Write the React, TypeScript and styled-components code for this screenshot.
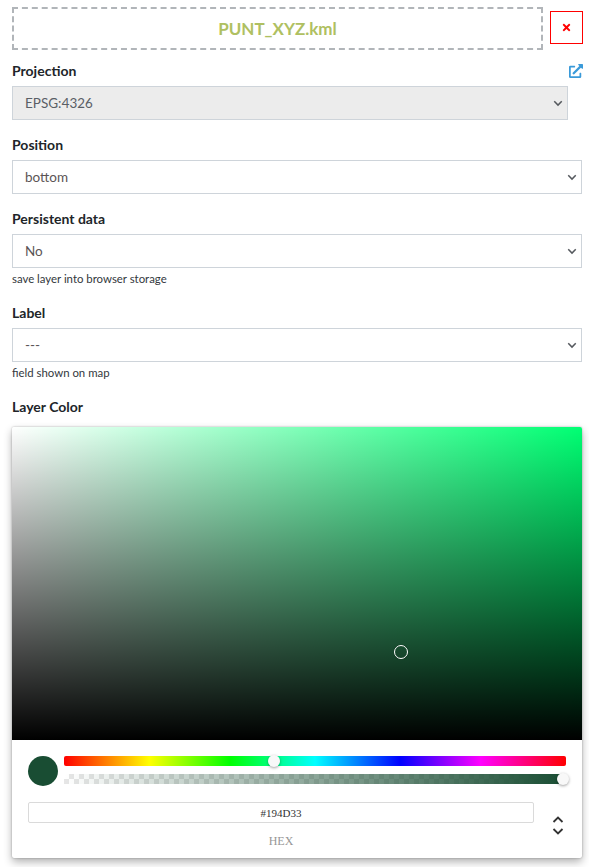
import styled, { createGlobalStyle } from "styled-components";
import { FaExternalLinkAlt, FaTimes } from "react-icons/fa";

const GlobalStyle = createGlobalStyle`
    html, body {
        margin: 0;
        background: #fff;
    }
    body {
        font-family: Lato, "Noto Sans", sans-serif;
        font-size: 14px;
        color: #212529;
    }
`;

const Chevron = ({ up }: { up?: boolean }) => (
    <svg width="12" height="8" viewBox="0 0 12 8">
        <polyline
            points={up ? "1.5,6 6,1.5 10.5,6" : "1.5,2 6,6.5 10.5,2"}
            fill="none"
            stroke="currentColor"
            strokeWidth="1.8"
        />
    </svg>
);

const Field = ({ label, value, hint }: { label: string; value: string; hint?: string }) => (
    <FieldBlock>
        <FieldLabel>{label}</FieldLabel>
        <SelectBox>
            <span>{value}</span>
            <Chevron />
        </SelectBox>
        {hint && <Hint>{hint}</Hint>}
    </FieldBlock>
);

export default function App() {
    return (
        <>
            <GlobalStyle />
            <Page>
                <TopRow>
                    <DropZone>PUNT_XYZ.kml</DropZone>
                    <CloseButton>
                        <FaTimes size={11} />
                    </CloseButton>
                </TopRow>

                <FieldBlock>
                    <LabelRow>
                        <FieldLabel>Projection</FieldLabel>
                        <ExternalLink>
                            <FaExternalLinkAlt size={14} />
                        </ExternalLink>
                    </LabelRow>
                    <SelectBox $disabled>
                        <span>EPSG:4326</span>
                        <Chevron />
                    </SelectBox>
                </FieldBlock>

                <Field label="Position" value="bottom" />
                <Field label="Persistent data" value="No" hint="save layer into browser storage" />
                <Field label="Label" value="---" hint="field shown on map" />

                <ColorLabel>Layer Color</ColorLabel>
                <ColorPicker>
                    <Saturation>
                        <SaturationPointer />
                    </Saturation>
                    <PickerBody>
                        <ControlsRow>
                            <Swatch />
                            <Sliders>
                                <HueBar>
                                    <HueKnob />
                                </HueBar>
                                <AlphaBar>
                                    <AlphaKnob />
                                </AlphaBar>
                            </Sliders>
                        </ControlsRow>
                        <HexRow>
                            <HexColumn>
                                <HexInput>#194D33</HexInput>
                                <HexLabel>HEX</HexLabel>
                            </HexColumn>
                            <Toggle>
                                <Chevron up />
                                <Chevron />
                            </Toggle>
                        </HexRow>
                    </PickerBody>
                </ColorPicker>
            </Page>
        </>
    );
}

const Page = styled.div`
    width: 570px;
    padding: 7px 0 9px 12px;
`;

const TopRow = styled.div`
    display: flex;
    align-items: flex-start;
    gap: 7px;
    width: 571px;
    margin-bottom: 11px;
`;

const DropZone = styled.div`
    box-sizing: border-box;
    flex: none;
    width: 531px;
    height: 43px;
    border: 2px dashed #b1b5b9;
    display: flex;
    align-items: center;
    justify-content: center;
    font-size: 17px;
    font-weight: 700;
    color: #afc061;
`;

const CloseButton = styled.button`
    box-sizing: border-box;
    flex: none;
    width: 33px;
    height: 33px;
    margin-top: 4px;
    padding: 0;
    border: 1px solid #f00;
    background: #fff;
    color: #f00;
    display: flex;
    align-items: center;
    justify-content: center;
`;

const FieldBlock = styled.div`
    margin-bottom: 15px;
    position: relative;
`;

const LabelRow = styled.div`
    display: flex;
    justify-content: space-between;
    align-items: center;
`;

const FieldLabel = styled.div`
    font-size: 14px;
    font-weight: 700;
    line-height: 20px;
    margin-bottom: 5px;
    color: #212529;
`;

const ColorLabel = styled(FieldLabel)`
    margin-bottom: 10px;
`;

const ExternalLink = styled.a`
    color: #3a9ad9;
    display: flex;
    margin: -5px -1px 0 0;
`;

const SelectBox = styled.div<{ $disabled?: boolean }>`
    box-sizing: border-box;
    width: ${(p) => (p.$disabled ? "556px" : "100%")};
    height: 34px;
    padding: 0 4px 0 12px;
    display: flex;
    align-items: center;
    justify-content: space-between;
    border: 1px solid #ced4da;
    background: ${(p) => (p.$disabled ? "#ececec" : "#fff")};
    color: ${(p) => (p.$disabled ? "#5a5f66" : "#5b5455")};
    font-size: 13.5px;
    font-variant-numeric: proportional-nums;

    svg {
        color: #55595e;
        width: 10px;
    }
`;

const Hint = styled.div`
    font-size: 11.4px;
    line-height: 18px;
    margin-top: 2px;
    color: #33383d;
`;

const ColorPicker = styled.div`
    width: 570px;
    height: 431px;
    background: #fff;
    border-radius: 2px;
    box-shadow: 0 0 2px rgba(0, 0, 0, 0.3), 0 4px 8px rgba(0, 0, 0, 0.3);
    display: flex;
    flex-direction: column;
    font-family: "Liberation Serif", serif;
`;

const Saturation = styled.div`
    position: relative;
    height: 313px;
    border-radius: 2px 2px 0 0;
    background:
        linear-gradient(to top, #000, rgba(0, 0, 0, 0)),
        linear-gradient(to right, #fff, rgba(255, 255, 255, 0)),
        hsl(147, 100%, 50%);
`;

const SaturationPointer = styled.div`
    position: absolute;
    left: 382px;
    top: 218px;
    box-sizing: border-box;
    width: 14px;
    height: 14px;
    border-radius: 50%;
    border: 1.5px solid #fff;
    box-shadow: 0 0 1px rgba(0, 0, 0, 0.6);
`;

const PickerBody = styled.div`
    flex: 1;
    padding: 16px 16px 0;
`;

const ControlsRow = styled.div`
    display: flex;
    gap: 6px;
    margin-bottom: 16px;
`;

const Swatch = styled.div`
    width: 30px;
    height: 30px;
    border-radius: 50%;
    background: #194d33;
`;

const Sliders = styled.div`
    flex: 1;
    display: flex;
    flex-direction: column;
    gap: 8px;
`;

const HueBar = styled.div`
    position: relative;
    height: 10px;
    border-radius: 2px;
    background: linear-gradient(to right, #f00 0%, #ff0 17%, #0f0 33%, #0ff 50%, #00f 67%, #f0f 83%, #f00 100%);
`;

const AlphaBar = styled.div`
    position: relative;
    height: 10px;
    background:
        linear-gradient(to right, rgba(25, 77, 51, 0), #194d33),
        repeating-conic-gradient(#e6e6e6 0% 25%, #fff 0% 50%) 0 0 / 10px 10px;
`;

const Knob = styled.div`
    position: absolute;
    top: -1px;
    width: 12px;
    height: 12px;
    border-radius: 50%;
    background: #f8f8f8;
    box-shadow: 0 1px 3px rgba(0, 0, 0, 0.37);
`;

const HueKnob = styled(Knob)`
    left: 204px;
`;

const AlphaKnob = styled(Knob)`
    left: 493px;
`;

const HexRow = styled.div`
    display: flex;
    justify-content: space-between;
`;

const HexColumn = styled.div`
    width: 506px;
`;

const HexInput = styled.div`
    box-sizing: border-box;
    height: 21px;
    border: 1px solid #dadada;
    border-radius: 2px;
    display: flex;
    align-items: center;
    justify-content: center;
    font-size: 11px;
    color: #333;
`;

const HexLabel = styled.div`
    margin-top: 11px;
    text-align: center;
    font-size: 12px;
    line-height: 14px;
    color: #969696;
`;

const Toggle = styled.div`
    box-sizing: border-box;
    width: 32px;
    margin-top: 14px;
    display: flex;
    flex-direction: column;
    align-items: flex-end;
    padding-right: 2px;
    gap: 3px;
    color: #333;
`;
